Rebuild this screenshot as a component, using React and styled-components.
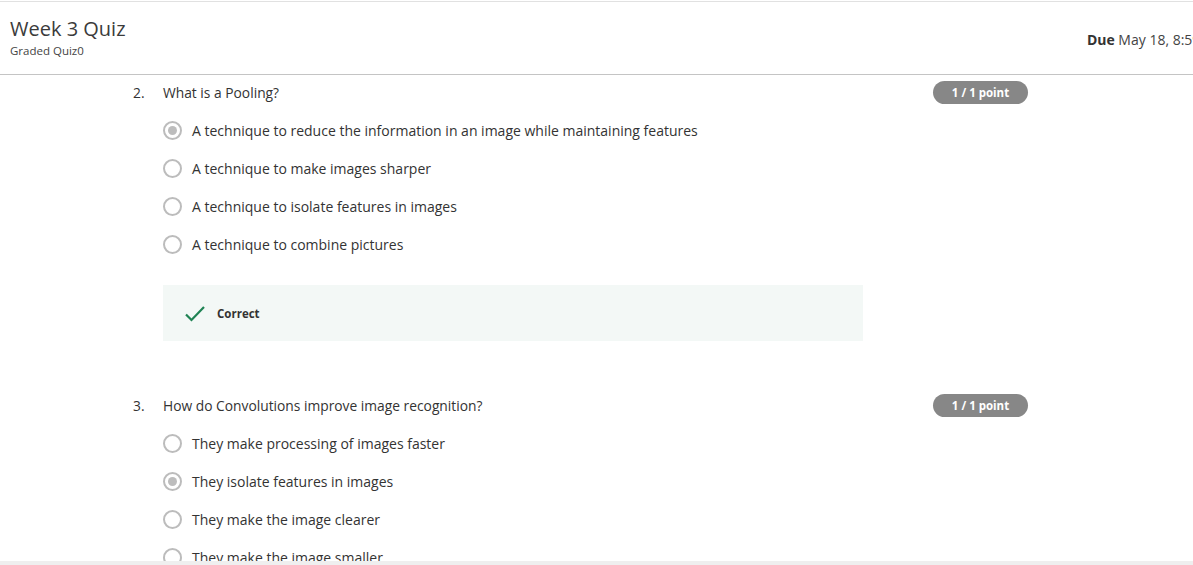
import React from 'react'
import styled, { createGlobalStyle } from 'styled-components'

const Global = createGlobalStyle`
  html, body {
    margin: 0;
    padding: 0;
    background: #fff;
    overflow: hidden;
  }
  body {
    font-family: "Open Sans", "Noto Sans", Arial, sans-serif;
    color: #373a3c;
  }
`

const Page = styled.div`
  width: 1193px;
  height: 565px;
  display: flex;
  flex-direction: column;
  overflow: hidden;
  padding-top: 1px;
  box-sizing: border-box;
`
const Header = styled.header`
  flex: none;
  height: 72px;
  border-top: 1px solid #e1e1e1;
  border-bottom: 1px solid #c4c4c4;
  display: flex;
  align-items: center;
  justify-content: space-between;
  padding-left: 10px;
  white-space: nowrap;
  overflow: hidden;
`
const TitleBlock = styled.div`
  display: flex;
  flex-direction: column;
  margin-top: -1px;
`
const Title = styled.h1`
  margin: 0;
  font-size: 20px;
  font-weight: 400;
  line-height: 26px;
  color: #3b3b3b;
`
const Subtitle = styled.div`
  font-size: 11.5px;
  line-height: 17px;
  color: #444;
`
const Due = styled.div`
  font-size: 14px;
  color: #444;
  margin-right: -32px;
  margin-top: 2px;
  b {
    font-weight: 700;
    color: #333;
  }
`
const Body = styled.main`
  flex: 1;
  overflow: hidden;
  padding: 5px 0 0 133px;
`
const Question = styled.section`
  width: 895px;
  margin-bottom: ${p => p.gap || 0}px;
`
const Heading = styled.div`
  height: 24px;
  display: flex;
  align-items: center;
  font-size: 13.8px;
  color: #333;
`
const Num = styled.span`
  width: 30px;
  flex: none;
`
const Prompt = styled.span`
  flex: 1;
`
const Badge = styled.span`
  width: 95px;
  height: 23px;
  border-radius: 12px;
  background: #878787;
  color: #fff;
  font-size: 11.5px;
  font-weight: 700;
  display: flex;
  align-items: center;
  justify-content: center;
`
const Options = styled.div`
  margin: 7px 0 0 30px;
  display: flex;
  flex-direction: column;
`
const Option = styled.label`
  height: 38px;
  display: flex;
  align-items: center;
  gap: 10px;
  font-size: 14px;
  color: #333;
`
const Radio = styled.span`
  width: 19px;
  height: 19px;
  box-sizing: border-box;
  border-radius: 50%;
  border: 2px solid #bcbcbc;
  display: flex;
  align-items: center;
  justify-content: center;
  &::after {
    content: '';
    width: 9px;
    height: 9px;
    border-radius: 50%;
    background: ${p => (p.checked ? '#bdbdbd' : 'transparent')};
  }
`
const Feedback = styled.div`
  margin: 22px 0 0 30px;
  width: 700px;
  height: 56px;
  background: #f3f8f6;
  display: flex;
  align-items: center;
  gap: 11px;
  padding-left: 21px;
  box-sizing: border-box;
  font-size: 11.5px;
  font-weight: 700;
  color: #333;
`
const Footer = styled.div`
  flex: none;
  height: 4px;
  background: #efefef;
`

const Check = () => (
  <svg width="22" height="18" viewBox="0 0 22 18" fill="none">
    <path d="M2 10.5 L7.5 16 L20 3" stroke="#1f8354" strokeWidth="2.2" />
  </svg>
)

const questions = [
  {
    n: '2.',
    q: 'What is a Pooling?',
    opts: [
      'A technique to reduce the information in an image while maintaining features',
      'A technique to make images sharper',
      'A technique to isolate features in images',
      'A technique to combine pictures',
    ],
    sel: 0,
    feedback: true,
    gap: 52,
  },
  {
    n: '3.',
    q: 'How do Convolutions improve image recognition?',
    opts: [
      'They make processing of images faster',
      'They isolate features in images',
      'They make the image clearer',
      'They make the image smaller',
    ],
    sel: 1,
  },
]

export default function App() {
  return (
    <Page>
      <Global />
      <Header>
        <TitleBlock>
          <Title>Week 3 Quiz</Title>
          <Subtitle>Graded Quiz0</Subtitle>
        </TitleBlock>
        <Due>
          <b>Due</b> May 18, 8:59 PM
        </Due>
      </Header>
      <Body>
        {questions.map(item => (
          <Question key={item.n} gap={item.gap}>
            <Heading>
              <Num>{item.n}</Num>
              <Prompt>{item.q}</Prompt>
              <Badge>1 / 1 point</Badge>
            </Heading>
            <Options>
              {item.opts.map((o, i) => (
                <Option key={o}>
                  <Radio checked={i === item.sel} />
                  {o}
                </Option>
              ))}
            </Options>
            {item.feedback && (
              <Feedback>
                <Check />
                Correct
              </Feedback>
            )}
          </Question>
        ))}
      </Body>
      <Footer />
    </Page>
  )
}
